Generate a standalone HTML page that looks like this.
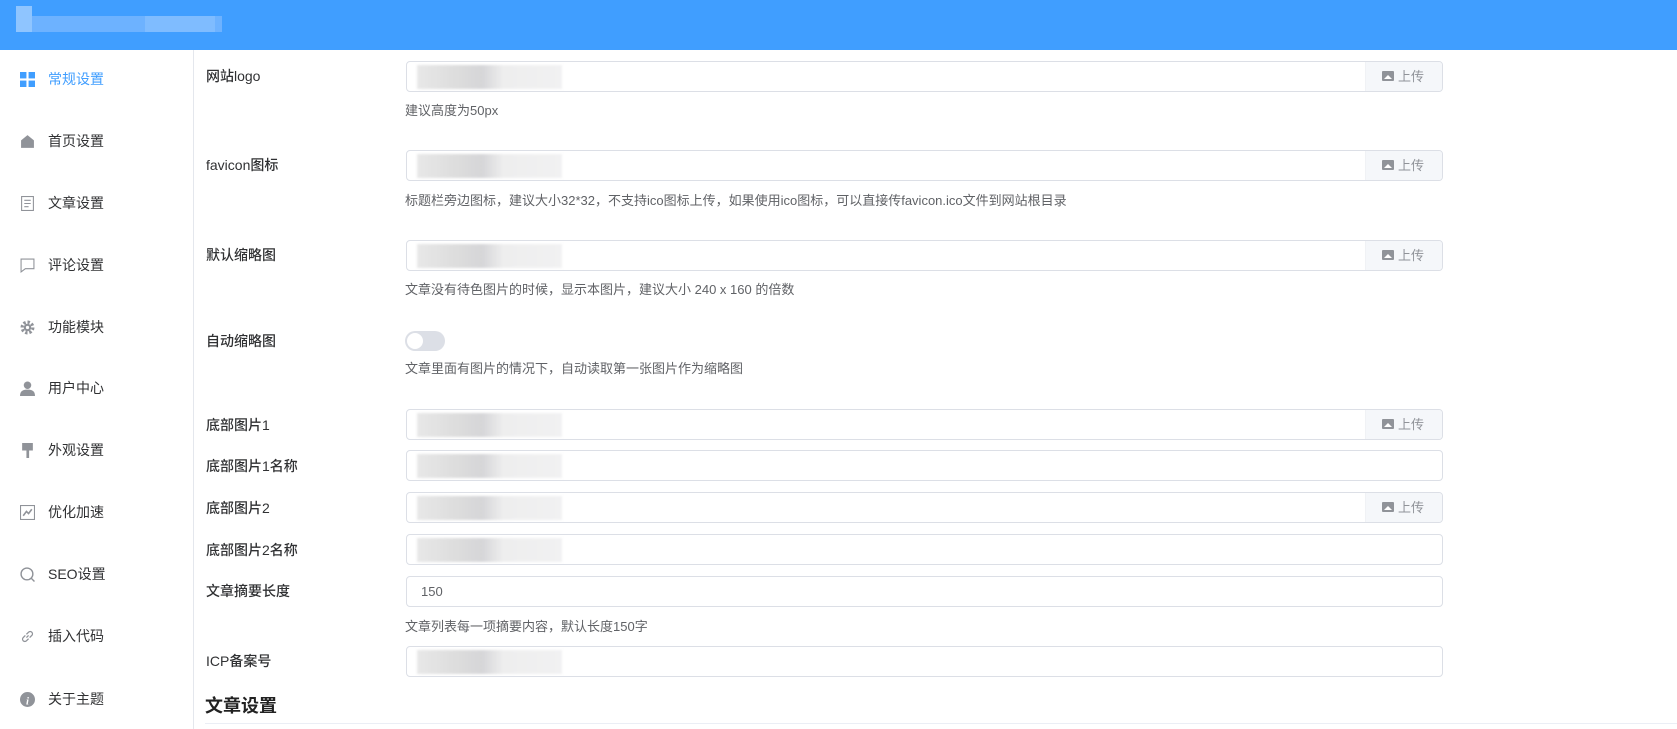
<!DOCTYPE html>
<html><head><meta charset="utf-8"><style>
*{margin:0;padding:0;box-sizing:border-box}
body{width:1677px;height:729px;overflow:hidden;background:#fff;font-family:"Liberation Sans","Noto Sans CJK SC",sans-serif;color:#333;position:relative}
.hd{position:absolute;left:0;top:0;width:1677px;height:50px;background:#409eff}
.hd .b{position:absolute;height:16px;top:16px}
.sb{position:absolute;left:0;top:50px;width:194px;height:679px;border-right:1px solid #e4e7ed}
.it{position:absolute;left:20px;height:20px;font-size:14px;color:#303133;line-height:20px}
.it svg{position:absolute;left:0;top:3px;width:15px;height:15px}
.it span{position:absolute;left:28px;white-space:nowrap}
.lb{position:absolute;left:206px;font-size:14px;color:#303133;font-weight:500;line-height:18px;white-space:nowrap}
.in{position:absolute;left:406px;width:1037px;height:31px;border:1px solid #dcdfe6;border-radius:4px;background:#fff;overflow:hidden}
.in .up{position:absolute;right:0;top:0;width:77px;height:29px;background:#f5f7fa;border-left:1px solid #f0f2f5;font-size:13px;color:#909399;line-height:29px;padding-left:32px}
.in .up i{position:absolute;left:16px;top:9px;width:12px;height:10px;background:#909399;border-radius:1px}
.in .up i:after{content:"";position:absolute;left:2px;bottom:2px;border-left:4px solid transparent;border-right:4px solid transparent;border-bottom:4px solid #fff}
.bl{position:absolute;left:10px;top:3px;width:145px;height:24px;background:linear-gradient(90deg,#e4e4e4 0,#d6d6d6 30%,#cfcfd2 45%,#ececec 60%,#efeff0 100%);filter:blur(1px);opacity:.85}
.ht{position:absolute;left:405px;font-size:13px;color:#606266;line-height:18px;white-space:nowrap}
</style></head><body>
<div class="hd">
<div class="b" style="left:16px;width:16px;background:#8fc5ff;top:6px;height:26px"></div>
<div class="b" style="left:32px;width:190px;background:#6db2ff"></div>
<div class="b" style="left:145px;width:70px;background:#7fbcff"></div>
</div>
<div class="sb">
<div class="it" style="top:19px;color:#409eff"><svg viewBox="0 0 14 14"><rect x="0" y="0" width="6" height="6" fill="#409eff"/><rect x="8" y="0" width="6" height="6" fill="#409eff"/><rect x="0" y="8" width="6" height="6" fill="#409eff"/><rect x="8" y="8" width="6" height="6" fill="#409eff"/></svg><span style="left:28px">常规设置</span></div>
<div class="it" style="top:81px"><svg viewBox="0 0 14 14"><path d="M7 1L1 6v7h12V6z" fill="#909399"/></svg><span>首页设置</span></div>
<div class="it" style="top:143px"><svg viewBox="0 0 14 14"><rect x="1.5" y="0.5" width="11" height="13" fill="none" stroke="#909399"/><path d="M4 4h6M4 7h6M4 10h4" stroke="#909399"/></svg><span>文章设置</span></div>
<div class="it" style="top:205px"><svg viewBox="0 0 14 14"><path d="M1 1h12v9H5l-4 3z" fill="none" stroke="#909399"/></svg><span>评论设置</span></div>
<div class="it" style="top:267px"><svg viewBox="0 0 14 14"><circle cx="7" cy="7" r="5" fill="none" stroke="#909399" stroke-width="3" stroke-dasharray="2.2 1.7"/><circle cx="7" cy="7" r="3.5" fill="#909399"/><circle cx="7" cy="7" r="1.5" fill="#fff"/></svg><span>功能模块</span></div>
<div class="it" style="top:328px"><svg viewBox="0 0 14 14"><circle cx="7" cy="4" r="3.5" fill="#909399"/><path d="M0 14c0-5 3-6 7-6s7 1 7 6z" fill="#909399"/></svg><span>用户中心</span></div>
<div class="it" style="top:390px"><svg viewBox="0 0 14 14"><rect x="2" y="0" width="10" height="7" fill="#909399"/><rect x="6" y="7" width="2.5" height="7" fill="#909399"/></svg><span>外观设置</span></div>
<div class="it" style="top:452px"><svg viewBox="0 0 14 14"><rect x="0.5" y="0.5" width="13" height="13" fill="none" stroke="#909399"/><path d="M3 10l3-4 2 2 3-4" fill="none" stroke="#909399" stroke-width="1.5"/></svg><span>优化加速</span></div>
<div class="it" style="top:514px"><svg viewBox="0 0 14 14"><circle cx="6.5" cy="6.5" r="5.5" fill="none" stroke="#909399" stroke-width="1.3"/><path d="M10.5 10.5l3 3" stroke="#909399" stroke-width="1.3"/></svg><span>SEO设置</span></div>
<div class="it" style="top:576px"><svg viewBox="0 0 14 14"><path d="M6 8l2-2M5 6L3 8a2 2 0 003 3l2-2M9 8l2-2a2 2 0 00-3-3L6 5" fill="none" stroke="#909399" stroke-width="1.2"/></svg><span>插入代码</span></div>
<div class="it" style="top:639px"><svg viewBox="0 0 14 14"><circle cx="7" cy="7" r="7" fill="#909399"/><text x="7" y="11.5" font-size="10" font-style="italic" font-weight="bold" fill="#fff" text-anchor="middle" font-family="Liberation Serif">i</text></svg><span>关于主题</span></div>
</div>

<div class="lb" style="top:67px">网站logo</div>
<div class="in" style="top:61px"><div class="bl"></div><div class="up"><i></i>上传</div></div>
<div class="ht" style="top:102px">建议高度为50px</div>

<div class="lb" style="top:156px">favicon图标</div>
<div class="in" style="top:150px"><div class="bl"></div><div class="up"><i></i>上传</div></div>
<div class="ht" style="top:192px">标题栏旁边图标，建议大小32*32，不支持ico图标上传，如果使用ico图标，可以直接传favicon.ico文件到网站根目录</div>

<div class="lb" style="top:246px">默认缩略图</div>
<div class="in" style="top:240px"><div class="bl"></div><div class="up"><i></i>上传</div></div>
<div class="ht" style="top:281px">文章没有待色图片的时候，显示本图片，建议大小 240 x 160 的倍数</div>

<div class="lb" style="top:332px">自动缩略图</div>
<div style="position:absolute;left:405px;top:331px;width:40px;height:20px;border-radius:10px;background:#dcdfe6"><div style="position:absolute;left:2px;top:2px;width:16px;height:16px;border-radius:50%;background:#fff"></div></div>
<div class="ht" style="top:360px">文章里面有图片的情况下，自动读取第一张图片作为缩略图</div>

<div class="lb" style="top:416px">底部图片1</div>
<div class="in" style="top:409px"><div class="bl"></div><div class="up"><i></i>上传</div></div>
<div class="lb" style="top:457px">底部图片1名称</div>
<div class="in" style="top:450px"><div class="bl"></div></div>
<div class="lb" style="top:499px">底部图片2</div>
<div class="in" style="top:492px"><div class="bl"></div><div class="up"><i></i>上传</div></div>
<div class="lb" style="top:541px">底部图片2名称</div>
<div class="in" style="top:534px"><div class="bl"></div></div>
<div class="lb" style="top:582px">文章摘要长度</div>
<div class="in" style="top:576px;font-size:13px;color:#606266;line-height:29px;padding-left:14px">150</div>
<div class="ht" style="top:618px">文章列表每一项摘要内容，默认长度150字</div>
<div class="lb" style="top:652px">ICP备案号</div>
<div class="in" style="top:646px"><div class="bl"></div></div>
<div style="position:absolute;left:205px;top:692px;font-size:18px;font-weight:bold;color:#222">文章设置</div>
<div style="position:absolute;left:205px;top:723px;width:1472px;height:1px;background:#ebeef5"></div>
</body></html>
